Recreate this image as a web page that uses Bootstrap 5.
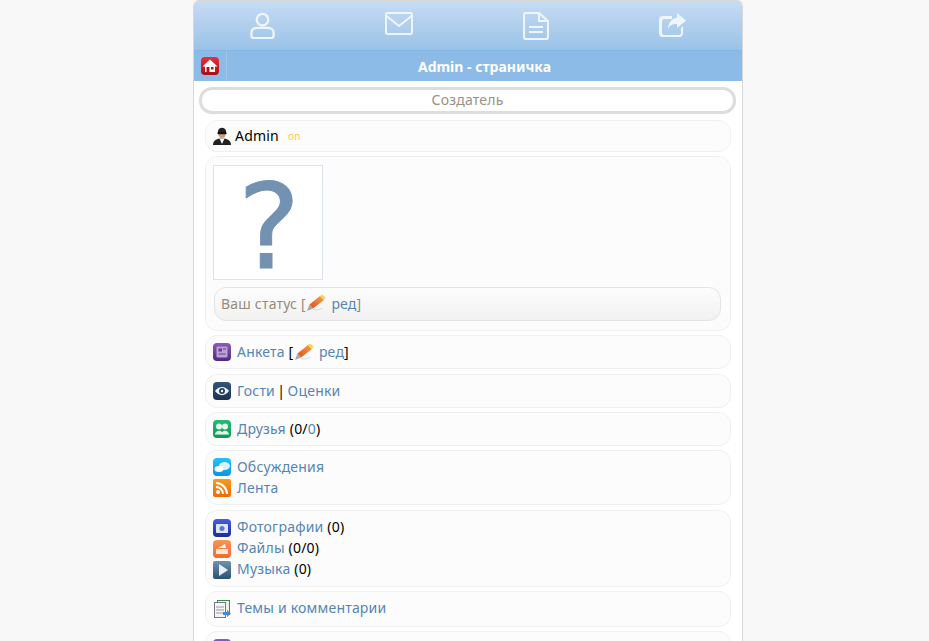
<!DOCTYPE html>
<html lang="ru">
<head>
    <meta charset="UTF-8">
    <meta name="viewport" content="width=device-width, initial-scale=1.0">
    <title>Admin - страничка</title>
    <link href="https://cdn.jsdelivr.net/npm/bootstrap@5.3.3/dist/css/bootstrap.min.css" rel="stylesheet">
    <style>
        html, body { height: 100%; overflow: hidden; }
        body { background: #f8f8f8; font-family: "Noto Sans", "Open Sans", sans-serif; font-size: 14px; line-height: 21px; color: #000; letter-spacing: .2px; }
        a { color: #5585b5; text-decoration: none; }
        .page-box { width: 550px; margin-left: 193px; height: 641px; background: #fff; border: 1px solid #d8d8d8; border-bottom: 0; border-radius: 6px 6px 0 0; overflow: hidden; }
        .top-tabs { height: 50px; background: linear-gradient(#c6dcf3, #9ac2e8); border-bottom: 1px solid #84b6e4; }
        .top-tabs > div { width: 136.7px; }
        .tab-up { margin-bottom: 4px; }
        .tab-up-small { margin-bottom: 2px; }
        .title-bar { height: 30px; background: #8bbbe6; color: #fff; font-weight: 700; letter-spacing: 0; }
        .home-cell { width: 33px; height: 30px; border-right: 1px solid #a0c6ea; }
        .role-pill { height: 27px; margin: 6px 6px 6px 5px; border: 3px solid #ddd; border-radius: 13px; color: #9a9188; line-height: 19px; }
        .rows { padding: 0 11px; gap: 4px; }
        .row-box { background: #fcfcfc; border: 1px solid #f0f0f0; border-radius: 12px; padding: 5.5px 7px; }
        .row-top { padding-top: 4.5px; padding-bottom: 4.5px; }
        .row-photo { padding-top: 8px; padding-bottom: 9px; }
        .row-media { padding-top: 6px; padding-bottom: 6px; }
        .row-topics { padding-top: 6px; padding-bottom: 7px; }
        .row-shift { margin-top: 1px; }
        .row-line { height: 21px; gap: 6px; }
        .row-line-tight { gap: 4px; }
        .row-line > span, .row-line > a { padding-bottom: 2px; }
        .row-line > .on-mark { color: #ffc83c; font-size: 10px; margin-left: 5px; padding-bottom: 0; }
        .tight-words { word-spacing: -1.5px; }
        .ico { width: 18px; height: 18px; flex: none; }
        .avatar-box { width: 110px; height: 115px; margin-bottom: 7px; background: #fff; border: 1px solid #dbe4ee; }
        .avatar-box svg { display: block; overflow: visible; }
        .avatar-box text { fill: #7391b1; stroke: #7391b1; stroke-width: 1px; font-family: "DejaVu Sans", sans-serif; font-size: 118px; letter-spacing: 0; }
        .status-box { height: 34px; margin: 0 2px 0 1px; padding: 0 6px 2px; background: linear-gradient(#fdfdfd, #f1f1f1); border: 1px solid #e4e4e4; border-radius: 12px; color: #9a8a78; }
        .pencil { width: 20px; height: 18px; margin: 0 5px 0 .5px; vertical-align: -4px; }
    </style>
</head>
<body>

    <svg width="0" height="0" class="position-absolute">
        <defs>
            <linearGradient id="pen-body" x1="0" y1="1" x2="1" y2="0"><stop offset="0" stop-color="#e2501a"/><stop offset="1" stop-color="#f6a04a"/></linearGradient>
            <linearGradient id="red-fill" x1="0" y1="0" x2="0" y2="1"><stop offset="0" stop-color="#e8303a"/><stop offset="1" stop-color="#a80d18"/></linearGradient>
            <linearGradient id="purple-fill" x1="0" y1="0" x2="0" y2="1"><stop offset="0" stop-color="#8d5cb8"/><stop offset="1" stop-color="#4f2a80"/></linearGradient>
            <linearGradient id="navy-fill" x1="0" y1="0" x2="0" y2="1"><stop offset="0" stop-color="#34547a"/><stop offset="1" stop-color="#1c3350"/></linearGradient>
            <linearGradient id="green-fill" x1="0" y1="0" x2="0" y2="1"><stop offset="0" stop-color="#22bc74"/><stop offset="1" stop-color="#0c9a54"/></linearGradient>
            <linearGradient id="sky-fill" x1="0" y1="0" x2="0" y2="1"><stop offset="0" stop-color="#22c4f6"/><stop offset="1" stop-color="#0a94e4"/></linearGradient>
            <linearGradient id="rss-fill" x1="0" y1="0" x2="0" y2="1"><stop offset="0" stop-color="#fa9a1e"/><stop offset="1" stop-color="#ee6c08"/></linearGradient>
            <linearGradient id="blue-fill" x1="0" y1="0" x2="0" y2="1"><stop offset="0" stop-color="#4a5ee0"/><stop offset="1" stop-color="#1c2a9c"/></linearGradient>
            <linearGradient id="coral-fill" x1="0" y1="0" x2="0" y2="1"><stop offset="0" stop-color="#fa9458"/><stop offset="1" stop-color="#f06a2c"/></linearGradient>
            <linearGradient id="steel-fill" x1="0" y1="0" x2="0" y2="1"><stop offset="0" stop-color="#6f93b0"/><stop offset="1" stop-color="#2c5272"/></linearGradient>
            <symbol id="pen" viewBox="0 0 20 18">
                <path d="M1 17l2.500-6.500 3.500 4z" fill="#a8a8a8"/>
                <path d="M3.500 10.500L14 2l4 4L7 14.500z" fill="url(#pen-body)"/>
                <path d="M14 2l2-1.500 3.500 3-1.500 2.500z" fill="#f6d84a"/>
                <path d="M7 15.500c3 1 6 .5 9-1.500" fill="none" stroke="#d8d8d8"/>
            </symbol>
        </defs>
    </svg>

    <div class="page-box">

        <div class="top-tabs d-flex align-items-center">
            <div class="text-center">
                <svg width="27" height="27" viewBox="0 0 28 28" fill="none" stroke="#eef5fc" stroke-width="2.400"><circle cx="14" cy="8" r="6"/><path d="M5 27h18a2.500 2.500 0 0 0 2.500-2.500v-3c0-3-2.500-5-5.500-5H8c-3 0-5.500 2-5.500 5v3A2.500 2.500 0 0 0 5 27z"/></svg>
            </div>
            <div class="text-center tab-up">
                <svg width="28" height="24" viewBox="0 0 28 24" fill="none" stroke="#eef5fc" stroke-width="2"><rect x="1" y="1" width="26" height="21" rx="2"/><path d="M1.500 4l12.500 10 12.500-10"/></svg>
            </div>
            <div class="text-center">
                <svg width="26" height="28" viewBox="0 0 26 28" fill="none" stroke="#eef5fc" stroke-width="2.200"><path d="M3 1h13l9 8v16a2 2 0 0 1-2 2H3a2 2 0 0 1-2-2V3a2 2 0 0 1 2-2z"/><path d="M16 1v8h9M6 15h14M6 20h14"/></svg>
            </div>
            <div class="text-center tab-up-small">
                <svg width="29" height="26" viewBox="0 0 29 26"><path d="M5 4h9v3H6a2 2 0 0 0-2 2v12a2 2 0 0 0 2 2h15a2 2 0 0 0 2-2v-5l2-2v7a4 4 0 0 1-4 4H5a4 4 0 0 1-4-4V8a4 4 0 0 1 4-4z" fill="#eef5fc"/><path d="M19 1l9 7.500-9 7.500v-4c-5 0-8 1-9 6 0-7 3-11 9-12.500z" fill="#eef5fc"/></svg>
            </div>
        </div>

        <div class="title-bar d-flex align-items-center">
            <div class="home-cell d-flex align-items-center justify-content-center">
                <svg width="18" height="18" viewBox="0 0 18 18"><rect width="18" height="18" rx="4" fill="url(#red-fill)"/><path d="M9 2.500L1.500 9.500H4v5.500h10V9.500h2.500z" fill="#fff"/><rect x="10" y="10" width="2.500" height="2.500" fill="#c3101d"/><rect x="5.500" y="10" width="3" height="5" fill="#c3101d"/></svg>
            </div>
            <div class="flex-grow-1 text-center">Admin - страничка</div>
        </div>

        <div class="role-pill text-center">Создатель</div>

        <div class="rows d-flex flex-column">

            <div class="row-box row-top">
                <div class="row-line row-line-tight d-flex align-items-center">
                    <svg class="ico" viewBox="0 0 18 18"><path d="M0 18c0-5 4-6.500 9-6.500s9 1.500 9 6.500z" fill="#222"/><path d="M6.500 11.500h5L9 17z" fill="#fff"/><ellipse cx="9" cy="6.500" rx="3.800" ry="5" fill="#cf9f7c"/><path d="M5 5.500C4 -1 14 -1 13 5.500z" fill="#222"/><rect x="4.500" y="5" width="9" height="2.200" rx=".8" fill="#111"/></svg>
                    <span>Admin</span><span class="on-mark">on</span>
                </div>
            </div>

            <div class="row-box row-photo">
                <div class="avatar-box d-flex justify-content-center">
                    <svg width="108" height="113" viewBox="0 0 108 113"><text x="55" y="102" text-anchor="middle">?</text></svg>
                </div>
                <div class="status-box d-flex align-items-center">Ваш статус [<svg class="pencil"><use href="#pen"/></svg><a href="#">ред</a>]</div>
            </div>

            <div class="row-box">
                <div class="row-line d-flex align-items-center">
                    <svg class="ico" viewBox="0 0 18 18"><rect width="18" height="18" rx="4" fill="url(#purple-fill)"/><rect x="3.500" y="3.500" width="11" height="11" rx="1" fill="#b9a2d4"/><rect x="5.500" y="5.500" width="3.500" height="3" fill="#6a3b98"/><path d="M10 6h3M5.500 11h7" stroke="#6a3b98"/></svg>
                    <span><a href="#">Анкета</a> [<svg class="pencil"><use href="#pen"/></svg><a href="#">ред</a>]</span>
                </div>
            </div>

            <div class="row-box row-shift">
                <div class="row-line d-flex align-items-center">
                    <svg class="ico" viewBox="0 0 18 18"><rect width="18" height="18" rx="4" fill="url(#navy-fill)"/><path d="M2 9c4-5.500 10-5.500 14 0-4 5.500-10 5.500-14 0z" fill="#f0f4f8"/><circle cx="9" cy="9" r="3" fill="#25405f"/><circle cx="9" cy="9" r="1.200" fill="#f0f4f8"/></svg>
                    <span class="tight-words"><a href="#">Гости</a> | <a href="#">Оценки</a></span>
                </div>
            </div>

            <div class="row-box">
                <div class="row-line d-flex align-items-center">
                    <svg class="ico" viewBox="0 0 18 18"><rect width="18" height="18" rx="4" fill="url(#green-fill)"/><circle cx="6" cy="6.500" r="3" fill="#e6f6ee"/><circle cx="12" cy="6.500" r="3" fill="#e6f6ee"/><path d="M2 14.500c0-4 6-5 7-2 1-3 7-2 7 2z" fill="#e6f6ee"/></svg>
                    <span><a href="#">Друзья</a> (0/<a href="#">0</a>)</span>
                </div>
            </div>

            <div class="row-box">
                <div class="row-line d-flex align-items-center">
                    <svg class="ico" viewBox="0 0 18 18"><rect width="18" height="18" rx="4" fill="url(#sky-fill)"/><ellipse cx="11.500" cy="8" rx="5.500" ry="4" fill="#d6f0fc"/><ellipse cx="6" cy="11" rx="4.500" ry="3" fill="#fff"/></svg>
                    <a href="#">Обсуждения</a>
                </div>
                <div class="row-line d-flex align-items-center">
                    <svg class="ico" viewBox="0 0 18 18"><rect width="18" height="18" rx="2" fill="url(#rss-fill)"/><circle cx="5" cy="13" r="2" fill="#fff"/><path d="M3 8a7 7 0 0 1 7 7M3 4a11 11 0 0 1 11 11" fill="none" stroke="#fff" stroke-width="2"/></svg>
                    <a href="#">Лента</a>
                </div>
            </div>

            <div class="row-box row-media row-shift">
                <div class="row-line d-flex align-items-center">
                    <svg class="ico" viewBox="0 0 18 18"><rect width="18" height="18" rx="4" fill="url(#blue-fill)"/><rect x="3" y="5" width="12" height="9" rx="1" fill="#dbe6f6"/><circle cx="9" cy="9.500" r="2.500" fill="#5a78c8"/></svg>
                    <span><a href="#">Фотографии</a> (0)</span>
                </div>
                <div class="row-line d-flex align-items-center">
                    <svg class="ico" viewBox="0 0 18 18"><rect width="18" height="18" rx="4" fill="url(#coral-fill)"/><path d="M3 9h12v5H3z" fill="#fde6d8"/><path d="M5 8l7-4 1 4z" fill="#fff"/></svg>
                    <span><a href="#">Файлы</a> (0/0)</span>
                </div>
                <div class="row-line d-flex align-items-center">
                    <svg class="ico" viewBox="0 0 18 18"><rect width="18" height="18" rx="2" fill="url(#steel-fill)"/><path d="M6 3l9 6-9 6z" fill="#e8f0f6"/></svg>
                    <span><a href="#">Музыка</a> (0)</span>
                </div>
            </div>

            <div class="row-box row-topics">
                <div class="row-line d-flex align-items-center">
                    <svg class="ico" viewBox="0 0 18 18"><rect x="4.500" y=".5" width="12" height="14" fill="#e8f2e8" stroke="#3c8c4c"/><rect x="1.500" y="2.500" width="11" height="15" fill="#f4f4f4" stroke="#778"/><path d="M3 7h8M3 10h8M3 13h8" stroke="#99a"/><path d="M10 12h4v-2l4 3.500-4 3.500v-2h-4z" fill="#3c8cd8"/></svg>
                    <a href="#">Темы и комментарии</a>
                </div>
            </div>

            <div class="row-box">
                <div class="row-line d-flex align-items-center">
                    <svg class="ico" viewBox="0 0 18 18"><rect width="18" height="18" rx="4" fill="url(#purple-fill)"/></svg>
                </div>
            </div>

        </div>
    </div>

    <script src="https://cdn.jsdelivr.net/npm/bootstrap@5.3.3/dist/js/bootstrap.bundle.min.js"></script>
</body>
</html>
